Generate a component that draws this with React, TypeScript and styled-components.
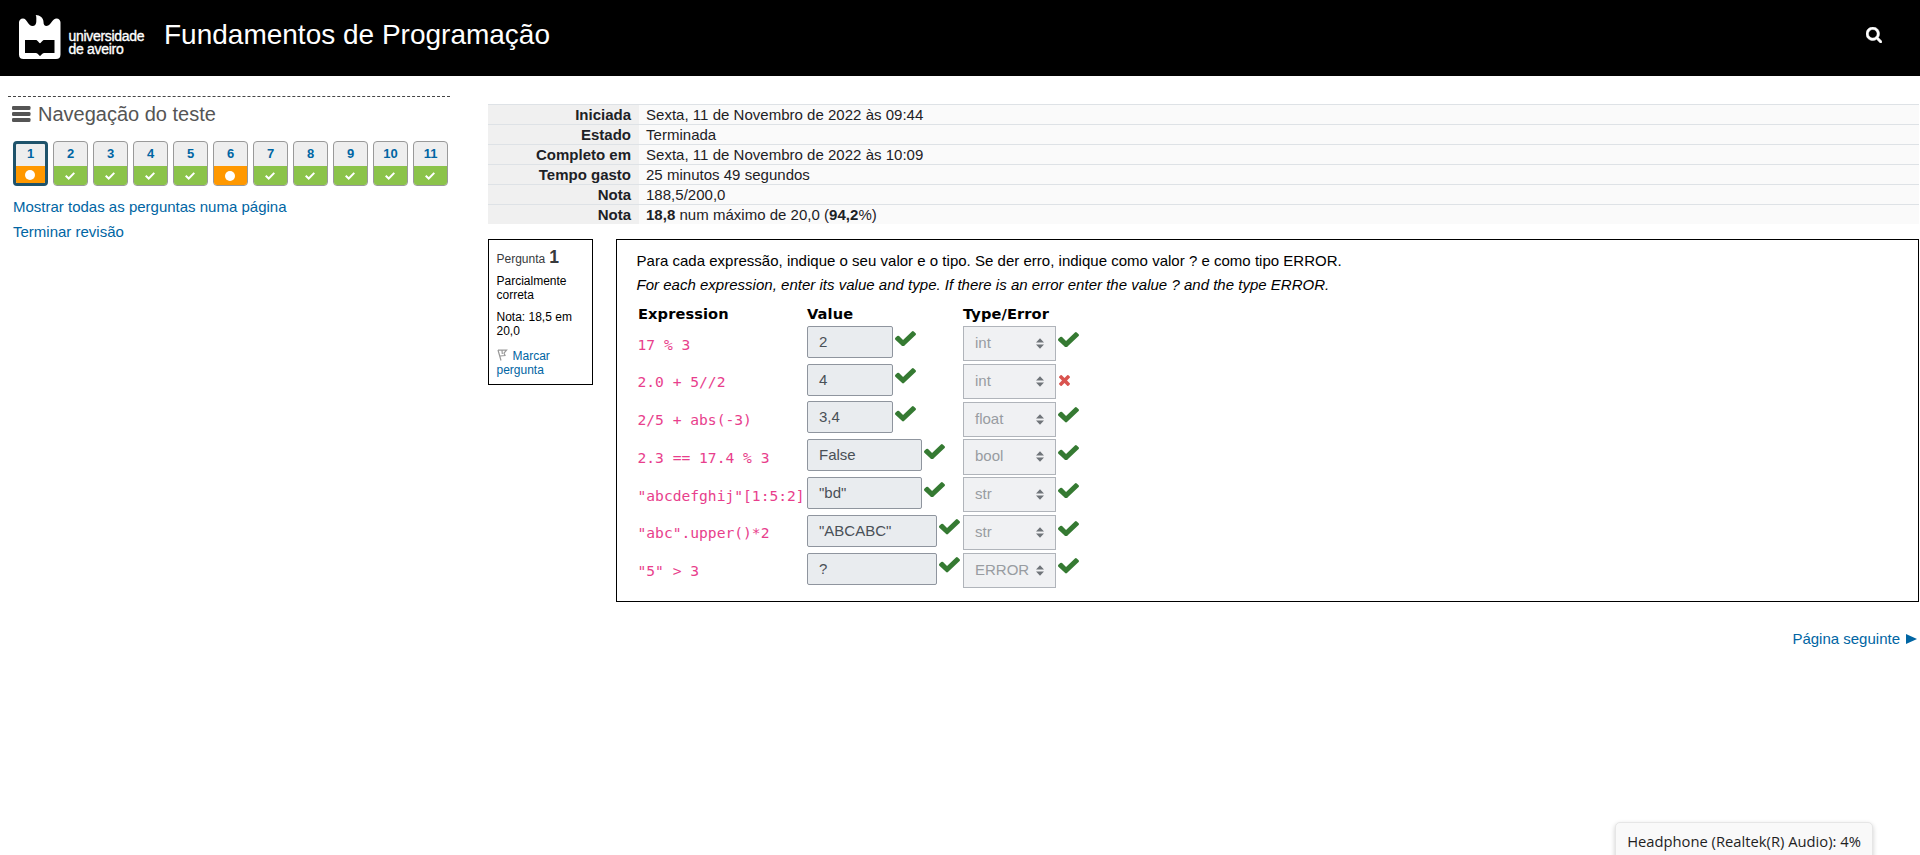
import React from "react";
import styled, { createGlobalStyle, css } from "styled-components";

const GlobalStyle = createGlobalStyle`
  *, *::before, *::after { box-sizing: border-box; }
  html, body { margin: 0; padding: 0; }
  body {
    background: #fff;
    color: #1d2125;
    font: 15px/22px "Liberation Sans", Arial, sans-serif;
    height: 855px;
    overflow: hidden;
  }
  p, h1, h2, h3 { margin: 0; font-weight: 400; }
  a { color: #0065a3; text-decoration: none; }
`;

const Page = styled.div`
  height: 855px;
  overflow: hidden;
`;

const Header = styled.header`
  display: flex;
  height: 76px;
  padding: 0 38px 0 18px;
  background: #000;
  color: #fff;
`;

const Brand = styled.a`
  display: flex;
  width: 146px;
  padding-top: 14px;
  color: #fff;
`;

const BrandName = styled.span`
  margin: 16px 0 0 7.5px;
  font-size: 14px;
  line-height: 13px;
  letter-spacing: -0.3px;
  white-space: pre;
  -webkit-text-stroke: 0.35px #fff;
`;

const CourseTitle = styled.h1`
  flex: 1;
  padding-top: 18px;
  font-size: 28px;
  line-height: 34px;
`;

const SearchButton = styled.a`
  display: flex;
  padding-top: 27px;
  color: #fff;
`;

const Columns = styled.div`
  display: flex;
  padding: 0 1px 0 8px;
`;

const Sidebar = styled.aside`
  width: 442px;
  margin-top: 20px;
  border-top: 1px dashed #444;
`;

const BlockTitle = styled.h2`
  display: flex;
  align-items: center;
  gap: 7px;
  height: 24px;
  margin: 5px 0 0 4px;
  color: #555;
  font-size: 20px;
  line-height: 24px;
`;

const QuestionButtons = styled.nav`
  display: flex;
  gap: 5px;
  margin: 15px 0 0 5px;
`;

const QuestionButton = styled.a<{ $current?: boolean }>`
  display: flex;
  flex-direction: column;
  width: 35px;
  height: 45px;
  overflow: hidden;
  border: 1px solid #999;
  border-radius: 4px;
  background: #eee;
  color: #0065a3;
  font-size: 13px;
  font-weight: 700;
  line-height: 24px;
  text-align: center;

  ${(p) =>
    p.$current &&
    css`
      border: 3px solid #1f536b;
      line-height: 20px;
    `}
`;

const ButtonNumber = styled.span<{ $current?: boolean }>`
  height: ${(p) => (p.$current ? 22 : 24)}px;
`;

const ButtonState = styled.span<{ $partial?: boolean }>`
  display: flex;
  flex: 1;
  justify-content: center;
  align-items: center;
  padding-right: 1px;
  background: ${(p) => (p.$partial ? "#ff9800" : "#8bc34a")};
  color: #fff;
`;

const SidebarLinks = styled.div`
  display: flex;
  flex-direction: column;
  margin: 9px 0 0 5px;
  line-height: 24.5px;
`;

const Main = styled.main`
  flex: 1;
  margin: 28px 0 0 38px;
`;

const Summary = styled.dl`
  display: grid;
  grid-template-columns: 151px 1fr;
  margin: 0 0 15px;
  line-height: 19px;
`;

const SummaryLabel = styled.dt`
  height: 20px;
  padding-right: 8px;
  border-top: 1px solid #dee2e6;
  background: #f0f0f0;
  font-weight: 700;
  text-align: right;
`;

const SummaryValue = styled.dd`
  height: 20px;
  margin: 0;
  padding-left: 7px;
  border-top: 1px solid #dee2e6;
  background: #fafafa;
  letter-spacing: 0.02px;
`;

const Question = styled.section`
  display: flex;
  align-items: flex-start;
  gap: 23px;
`;

const Info = styled.div`
  width: 105px;
  height: 146px;
  padding: 7px 8px 0 7.5px;
  border: 1px solid #000;
  color: #000;
  font-size: 12px;
  line-height: 14px;
`;

const InfoTitle = styled.h3`
  display: flex;
  align-items: baseline;
  gap: 4px;
  height: 27px;
  color: #373a3c;
  font-size: 12px;
  line-height: 20px;

  strong { font-size: 17.500px; }
`;

const InfoText = styled.p<{ $gap: number }>`
  margin-bottom: ${(p) => p.$gap}px;
`;

const FlagIcon = styled.svg`
  margin: -3px 5px 0 0;
  vertical-align: middle;
`;

const Content = styled.div`
  flex: 1;
  height: 363px;
  padding: 9px 20px 0 19.5px;
  border: 1px solid #000;
  color: #000;
`;

const Statement = styled.p<{ $italic?: boolean }>`
  font-style: ${(p) => (p.$italic ? "italic" : "normal")};
  letter-spacing: 0.015px;
  line-height: 24px;
`;

const Answers = styled.div`
  display: grid;
  grid-template-columns: 169px 156px 1fr;
  grid-template-rows: 24.2px;
  grid-auto-rows: 37.78px;
  margin: 5px 0 0 1.5px;
`;

const ColumnHead = styled.div`
  font: 700 14.6px/24px "DejaVu Sans", Verdana, sans-serif;
  letter-spacing: 0.1px;
`;

const Expression = styled.code`
  margin-left: -0.5px;
  padding-top: 0.4px;
  color: #e83e8c;
  font: 14.62px/36px "DejaVu Sans Mono", Consolas, monospace;
  white-space: pre;
`;

const AnswerCell = styled.div<{ $lift?: boolean }>`
  display: flex;
  align-items: flex-start;
  margin-top: ${(p) => (p.$lift ? -0.27 : 0)}px;
`;

const ValueField = styled.div<{ $width: number }>`
  width: ${(p) => p.$width}px;
  height: 32px;
  padding-left: 11px;
  border: 1px solid #8f959e;
  border-radius: 2px;
  background: #e9ecef;
  color: #495057;
  line-height: 30px;
`;

const TypeField = styled.div`
  display: flex;
  justify-content: space-between;
  width: 93px;
  height: 35.2px;
  padding: 0 11px 0 11px;
  border: 1px solid #b0b4ba;
  background: #f0f1f3;
  color: #989ca1;
  line-height: 32px;
`;

const Caret = styled.svg`
  margin-top: 11px;
`;

const Mark = styled.svg<{ $top: number; $left: number }>`
  margin: ${(p) => p.$top}px 0 0 ${(p) => p.$left}px;
  fill: currentColor;
`;

const NextPage = styled.div`
  display: flex;
  justify-content: flex-end;
  margin-top: 26px;
  padding-right: 2px;
`;

const NextArrow = styled.svg`
  margin: 6px 0 0 6px;
`;

const VolumeTooltip = styled.div`
  position: absolute;
  left: 1615px;
  top: 822px;
  width: 258px;
  height: 40px;
  border: 1px solid #e6e6e6;
  border-radius: 5px;
  background: #f9f9f9;
  box-shadow: 0 2px 5px rgba(0, 0, 0, 0.2);
  color: #1f1f1f;
  font: 14.75px/37px "Open Sans", "Noto Sans", sans-serif;
  text-align: center;
  white-space: nowrap;
`;

const CHECK =
  "M1671 566q0 40-28 68l-724 724-136 136q-28 28-68 28t-68-28l-136-136-362-362q-28-28-28-68t28-68l136-136q28-28 68-28t68 28l294 295 656-657q28-28 68-28t68 28l136 136q28 28 28 68z";
const CROSS =
  "M1490 1322q0 40-28 68l-136 136q-28 28-68 28t-68-28l-294-294-294 294q-28 28-68 28t-68-28l-136-136q-28-28-28-68t28-68l294-294-294-294q-28-28-28-68t28-68l136-136q28-28 68-28t68 28l294 294 294-294q28-28 68-28t68 28l136 136q28 28 28 68t-28 68l-294 294 294 294q28 28 28 68z";
const SEARCH =
  "M1216 832q0-185-131.5-316.5t-316.5-131.5-316.5 131.5-131.5 316.5 131.5 316.5 316.5 131.5 316.5-131.5 131.5-316.5zm512 832q0 52-38 90t-90 38q-54 0-90-38l-343-342q-179 124-399 124-143 0-273.5-55.5t-225-150-150-225-55.5-273.5 55.5-273.5 150-225 225-150 273.5-55.5 273.5 55.5 225 150 150 225 55.5 273.5q0 220-124 399l343 343q37 37 37 90z";

function Tick({ top }: { top: number }) {
  return (
    <Mark $top={top} $left={1.7} width="21" height="15.5" viewBox="121 330 1550 1195" preserveAspectRatio="none" color="#357a32">
      <path d={CHECK} />
    </Mark>
  );
}

function Cross() {
  return (
    <Mark $top={11.5} $left={2.5} width="11" height="11" viewBox="302 366 1188 1188" color="#d9534f">
      <path d={CROSS} />
    </Mark>
  );
}

const summary: [string, React.ReactNode][] = [
  ["Iniciada", "Sexta, 11 de Novembro de 2022 às 09:44"],
  ["Estado", "Terminada"],
  ["Completo em", "Sexta, 11 de Novembro de 2022 às 10:09"],
  ["Tempo gasto", "25 minutos 49 segundos"],
  ["Nota", "188,5/200,0"],
  ["Nota", <><b>18,8</b> num máximo de 20,0 (<b>94,2</b>%)</>],
];

const answers = [
  { expr: "17 % 3", value: "2", width: 86, type: "int", ok: true },
  { expr: "2.0 + 5//2", value: "4", width: 86, type: "int", ok: false },
  { expr: "2/5 + abs(-3)", value: "3,4", width: 86, type: "float", ok: true },
  { expr: "2.3 == 17.4 % 3", value: "False", width: 115, type: "bool", ok: true },
  { expr: '"abcdefghij"[1:5:2]', value: '"bd"', width: 115, type: "str", ok: true },
  { expr: '"abc".upper()*2', value: '"ABCABC"', width: 130, type: "str", ok: true },
  { expr: '"5" > 3', value: "?", width: 130, type: "ERROR", ok: true },
];

const partialQuestions = [1, 6];

export default function App() {
  return (
    <Page>
      <GlobalStyle />
      <Header>
        <Brand>
          <svg width="43" height="46" viewBox="0 0 43 46" fill="#fff">
            <path
              fillRule="evenodd"
              d="M1 8.5C1 6.5 2.5 4.5 5 4.5C7 4.5 8 6 9 7.500C10.500 10 12.500 12 14.500 12C17 12 18.300 10 18.300 7.500C18.300 5 18.600 2.500 17.700 1C22 1.200 25.500 4 25.500 8C25.500 10.500 26.500 12 28.500 12C31 12 32.500 9.500 34 7.500C35 6 36.500 4.500 38.500 4.500C41 4.500 42.500 6.500 42.500 8.500V40.500C42.500 43.500 41 45 38 45H5.500C2.500 45 1 43.500 1 40.500ZM7 26V39H18C20 39 20.500 41.500 22 42C23.500 41.500 24 39 26 39H36.500V26H26.500C24 26 23.500 28.800 22 29.300C20.500 28.800 20 26 17.500 26Z"
            />
          </svg>
          <BrandName>{"universidade\nde aveiro"}</BrandName>
        </Brand>
        <CourseTitle>Fundamentos de Programação</CourseTitle>
        <SearchButton>
          <svg width="16" height="16" viewBox="64 128 1664 1664" fill="currentColor" stroke="currentColor" strokeWidth="50">
            <path d={SEARCH} />
          </svg>
        </SearchButton>
      </Header>

      <Columns>
        <Sidebar>
          <BlockTitle>
            <svg width="19" height="16" viewBox="0 0 19 16" fill="#555">
              <rect width="18.500" height="4" rx="1.3" />
              <rect y="6" width="18.500" height="4" rx="1.3" />
              <rect y="12" width="18.500" height="4" rx="1.3" />
            </svg>
            Navegação do teste
          </BlockTitle>
          <QuestionButtons>
            {Array.from({ length: 11 }, (_, i) => i + 1).map((n) => {
              const partial = partialQuestions.includes(n);
              return (
                <QuestionButton key={n} $current={n === 1}>
                  <ButtonNumber $current={n === 1}>{n}</ButtonNumber>
                  <ButtonState $partial={partial}>
                    {partial ? (
                      <svg width="10" height="10" viewBox="0 0 10 10">
                        <circle cx="5" cy="5" r="5" fill="currentColor" />
                      </svg>
                    ) : (
                      <svg width="10" height="8" viewBox="0 0 10 8" fill="none" stroke="currentColor" strokeWidth="2">
                        <path d="M0.700 3.700L3.700 6.500L9.300 0.900" />
                      </svg>
                    )}
                  </ButtonState>
                </QuestionButton>
              );
            })}
          </QuestionButtons>
          <SidebarLinks>
            <a>Mostrar todas as perguntas numa página</a>
            <a>Terminar revisão</a>
          </SidebarLinks>
        </Sidebar>

        <Main>
          <Summary>
            {summary.map(([label, value], i) => (
              <React.Fragment key={i}>
                <SummaryLabel>{label}</SummaryLabel>
                <SummaryValue>{value}</SummaryValue>
              </React.Fragment>
            ))}
          </Summary>

          <Question>
            <Info>
              <InfoTitle>
                Pergunta <strong>1</strong>
              </InfoTitle>
              <InfoText $gap={8}>Parcialmente correta</InfoText>
              <InfoText $gap={11}>Nota: 18,5 em 20,0</InfoText>
              <a>
                <FlagIcon width="11" height="12" viewBox="0 0 11 12" fill="none" stroke="#999" strokeWidth="1.2">
                  <path d="M1 1L4 11.500M1 1.200L9.500 1.200L7 4L8 6.500L3 7M5 1.500L5.300 5" />
                </FlagIcon>
                Marcar pergunta
              </a>
            </Info>

            <Content>
              <Statement>
                Para cada expressão, indique o seu valor e o tipo. Se der erro, indique como valor ? e como tipo ERROR.
              </Statement>
              <Statement $italic>
                For each expression, enter its value and type. If there is an error enter the value ? and the type ERROR.
              </Statement>
              <Answers>
                <ColumnHead>Expression</ColumnHead>
                <ColumnHead>Value</ColumnHead>
                <ColumnHead>Type/Error</ColumnHead>
                {answers.map((a) => (
                  <React.Fragment key={a.expr}>
                    <Expression>{a.expr}</Expression>
                    <AnswerCell $lift>
                      <ValueField $width={a.width}>{a.value}</ValueField>
                      <Tick top={4.7} />
                    </AnswerCell>
                    <AnswerCell>
                      <TypeField>
                        {a.type}
                        <Caret width="8" height="11" viewBox="0 0 8 11" fill="#6f7479">
                          <path d="M0 4.500L4 0.300L8 4.500ZM0 6.500L4 10.700L8 6.500Z" />
                        </Caret>
                      </TypeField>
                      {a.ok ? <Tick top={5.5} /> : <Cross />}
                    </AnswerCell>
                  </React.Fragment>
                ))}
              </Answers>
            </Content>
          </Question>

          <NextPage>
            <a>Página seguinte</a>
            <NextArrow width="11" height="10" viewBox="0 0 11 10" fill="#0065a3">
              <path d="M0 0L11 5L0 10Z" />
            </NextArrow>
          </NextPage>
        </Main>
      </Columns>

      <VolumeTooltip>Headphone (Realtek(R) Audio): 4%</VolumeTooltip>
    </Page>
  );
}
